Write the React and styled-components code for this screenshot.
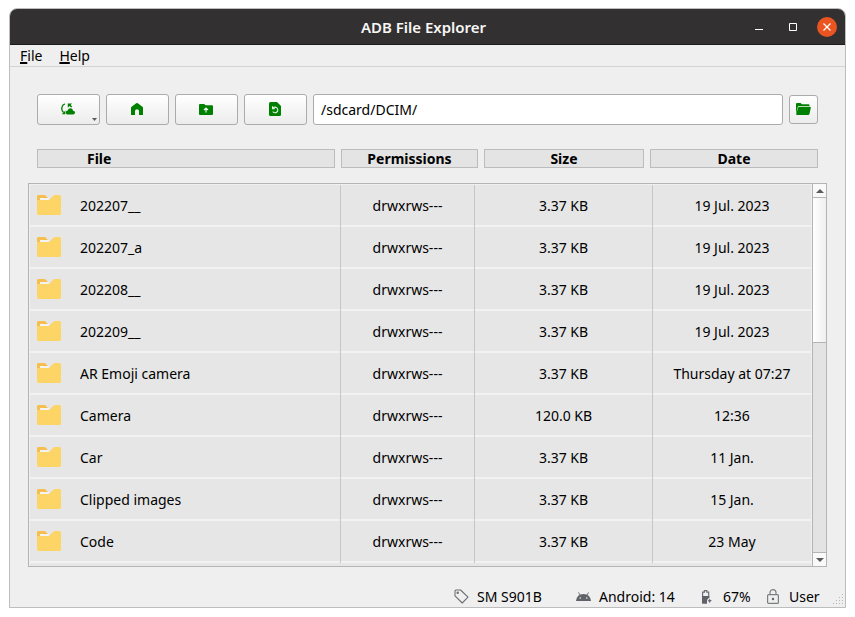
import React from "react";
import styled, { createGlobalStyle } from "styled-components";

const GlobalStyle = createGlobalStyle`
  * { box-sizing: border-box; }
  body { margin: 0; background: #ffffff; }
  body, button, input { font-family: "Noto Sans", "Open Sans", sans-serif; font-size: 14px; line-height: 20px; color: #000000; }
  button { padding: 0; cursor: pointer; }
  svg { display: block; flex: none; }
`;

const Desktop = styled.div`
  display: flex;
  height: 100vh;
  min-height: 400px;
  padding: 8px 9px 9px;
`;

const Window = styled.div`
  display: flex;
  flex: 1;
  flex-direction: column;
  min-width: 0;
  overflow: hidden;
  border: 1px solid #bdbdbd;
  border-radius: 8px 8px 0 0;
  background: #efefef;
`;

const TitleBar = styled.header`
  display: grid;
  grid-template-columns: 1fr auto 1fr;
  align-items: center;
  height: 36px;
  flex: none;
  padding-right: 8px;
  border-bottom: 1px solid #1c1b1b;
  background: #333031;
`;

const Title = styled.h1`
  grid-column: 2;
  margin: 0;
  font-size: 15px;
  font-weight: 600;
  color: #f7f7f5;
`;

const WindowControls = styled.div`
  display: flex;
  justify-content: flex-end;
  gap: 14px;
`;

const ControlButton = styled.button`
  display: grid;
  place-items: center;
  width: 20px;
  height: 20px;
  border: 0;
  border-radius: 50%;
  background: ${({ $close }) => ($close ? "#e95420" : "transparent")};
`;

const MenuBar = styled.nav`
  display: flex;
  gap: 17px;
  height: 22px;
  flex: none;
  padding-left: 10px;
  border-bottom: 1px solid #d3d3d3;
`;

const MenuButton = styled.button`
  height: 21px;
  border: 0;
  background: transparent;

  &::first-letter {
    text-decoration: underline;
    text-decoration-thickness: 2px;
  }
`;

const Content = styled.main`
  display: flex;
  flex: 1;
  flex-direction: column;
  min-height: 0;
  padding: 27px 18px 0;
`;

const Toolbar = styled.form`
  display: flex;
  align-items: center;
  gap: 6px;
  margin: 0;
  padding: 0 9px;
`;

const ToolButton = styled.button`
  position: relative;
  display: grid;
  place-items: center;
  flex: none;
  width: ${({ $compact }) => ($compact ? "29px" : "63px")};
  height: ${({ $compact }) => ($compact ? "29px" : "31px")};
  padding: 0 1px 1px 0;
  border: 1px solid #ababab;
  border-radius: 3px;
  background: linear-gradient(#ffffff, #ececec);
  color: #008000;
`;

const MenuArrow = styled.svg`
  position: absolute;
  right: 2px;
  bottom: 3px;
`;

const PathInput = styled.input`
  flex: 1;
  min-width: 0;
  height: 31px;
  padding: 0 7px;
  border: 1px solid #ababab;
  border-radius: 3px;
  background: #ffffff;
`;

const HeadTable = styled.table`
  display: block;
  margin: 24px 0 15px;
  padding: 0 9px;

  thead { display: block; }
`;

const HeadRow = styled.tr`
  display: grid;
  grid-template-columns: 298fr 137fr 160fr 168fr;
  gap: 6px;
`;

const HeadCell = styled.th`
  height: 19px;
  padding: 0 0 0 ${({ $first }) => ($first ? "49px" : "0")};
  border: 1px solid #bcbcbc;
  background: #e4e4e4;
  line-height: 18px;
  font-weight: 700;
  text-align: ${({ $first }) => ($first ? "left" : "center")};
`;

const ListFrame = styled.section`
  display: flex;
  flex: 1;
  min-height: 0;
  border: 1px solid #b4b4b4;
  background: #e6e6e6;
`;

const Viewport = styled.div`
  flex: 1;
  min-width: 0;
  overflow: auto;
  border: 1px solid #f0f0f0;
  border-bottom: 0;
`;

const FileTable = styled.table`
  display: block;

  tbody { display: block; }
`;

const FileRow = styled.tr`
  display: grid;
  grid-template-columns: 311fr 134fr 178fr 158fr;
`;

const Cell = styled.td`
  display: flex;
  align-items: center;
  justify-content: ${({ $name }) => ($name ? "flex-start" : "center")};
  gap: 19px;
  height: 42px;
  padding: 0 0 0 ${({ $name }) => ($name ? "7px" : "0")};
  border-right: 1px solid #c6c6c6;
  background: linear-gradient(#e6e6e6 40px, #f2f2f2 40px);
  white-space: nowrap;

  &:last-child { border-right: 0; }
`;

const ScrollBar = styled.div`
  display: flex;
  flex-direction: column;
  width: 14px;
  flex: none;
  border-left: 1px solid #b4b4b4;
  background: #e3e3e3;
`;

const ScrollButton = styled.button`
  display: grid;
  place-items: center;
  height: 14px;
  flex: none;
  border: 0 solid #b4b4b4;
  border-width: ${({ $down }) => ($down ? "1px 0 0" : "0 0 1px")};
  background: #f9f9f9;
`;

const ScrollTrack = styled.div`
  flex: 1;
`;

const ScrollThumb = styled.div`
  height: 41%;
  border-bottom: 1px solid #b4b4b4;
  background: linear-gradient(90deg, #ffffff, #efefef);
`;

const StatusBar = styled.footer`
  display: grid;
  grid-template-columns: 122px 124px 66px 70px 11px;
  align-items: center;
  justify-content: end;
  height: 40px;
  flex: none;
  padding: 19px 1px 0 0;
`;

const StatusItem = styled.span`
  display: flex;
  align-items: center;
  gap: 6px;
  white-space: nowrap;
`;

const StatusIcon = styled.span`
  display: grid;
  place-items: center;
  width: 20px;
  height: 20px;
`;

const Grip = styled.svg`
  align-self: end;
  margin-bottom: 2px;
`;

const FolderIcon = () => (
  <svg width="24" height="22" viewBox="0 0 24 22" aria-hidden="true">
    <path d="M1 0h7l3 3v3H0V1z" fill="#f6bd4f" />
    <path d="M3 3h9v3H3z" fill="#f3f3f3" />
    <path d="M0 5h11q2 0 3-2l2-2q1-1 2-1h5l1 1v18l-1 1H1l-1-1z" fill="#fdd466" />
  </svg>
);

const CloudSyncIcon = () => (
  <svg width="14" height="12" viewBox="0 0 14 12" fill="currentColor" aria-hidden="true">
    <path d="M3.800.9C.2 2.300-.2 7 2.600 9.600" fill="none" stroke="currentColor" strokeWidth="1.300" />
    <path d="M.8 11.200h3.600V7.600z" />
    <path d="M6.800.6h4.200L9.700 1.900l1.500 1.500-1 1-1.600-1.500L6.800 4.800z" />
    <path d="M7 11.500a2 2 0 0 1-.3-4Q7.400 5.300 9.500 5.300t2.600 2.400a1.900 1.900 0 0 1 0 3.800z" />
  </svg>
);

const HomeIcon = () => (
  <svg width="12" height="12" viewBox="0 0 12 12" fill="currentColor" aria-hidden="true">
    <path d="M0 4.800q0-.7.6-1.100L5.200.3q.8-.6 1.600 0l4.600 3.400q.6.4.6 1.100V12H8V8.200a2 2 0 0 0-4 0V12H0z" />
  </svg>
);

const FolderUpIcon = () => (
  <svg width="14" height="11" viewBox="0 0 14 11" aria-hidden="true">
    <path d="M1 0h4.200l1.400 1.300H13q1 0 1 1V10q0 1-1 1H1q-1 0-1-1V1q0-1 1-1z" fill="currentColor" />
    <path d="M7 8.500V4.500M5 6l2-2 2 2" fill="none" stroke="#e4f1e4" strokeWidth="1.200" />
  </svg>
);

const RestoreIcon = () => (
  <svg width="12" height="14" viewBox="0 0 12 14" aria-hidden="true">
    <path d="M1.500 0H8l4 4v8.500q0 1.500-1.500 1.500h-9Q0 14 0 12.500v-11Q0 0 1.500 0z" fill="currentColor" />
    <path d="M3.500 4.200v2.500H6M3.700 6.300A2.800 2.800 0 1 1 3.700 9.500" fill="none" stroke="#e4f1e4" strokeWidth="1.100" />
  </svg>
);

const OpenFolderIcon = () => (
  <svg width="15" height="12" viewBox="0 0 15 12" aria-hidden="true">
    <path d="M0 11V1q0-1 1-1h3.500L6 1.200h6.500q1 0 1 1V3H3.200Q2 3 1.800 4z" fill="currentColor" />
    <path d="M3.600 3.800H14q1 0 .8 1l-1.200 5.800Q13.400 12 12.400 12H1q-1 0-.8-1l1.800-6q.3-1.200 1.600-1.200z" fill="currentColor" />
  </svg>
);

const TagIcon = () => (
  <svg width="15" height="15" viewBox="0 0 15 15" fill="none" stroke="#6c6f72" strokeWidth="1.100" aria-hidden="true">
    <path d="M1 2q0-1 1-1h4.600L14 8.200 8.200 14 1 6.800z" strokeLinejoin="round" />
    <circle cx="3.700" cy="3.700" r=".7" />
  </svg>
);

const AndroidIcon = () => (
  <svg width="15" height="9" viewBox="0 0 15 9" aria-hidden="true">
    <path d="M4 3 2.500.4M11 3l1.500-2.600" stroke="#5f6368" strokeWidth=".9" fill="none" />
    <path d="M0 9Q.8 2 7.500 2T15 9z" fill="#5f6368" />
    <circle cx="4.200" cy="6" r=".8" fill="#efefef" />
    <circle cx="10.800" cy="6" r=".8" fill="#efefef" />
  </svg>
);

const BatteryIcon = () => (
  <svg width="10" height="14" viewBox="0 0 10 14" aria-hidden="true">
    <path d="M.6 13V2.200h1.800V.6h2.400v1.600h1.900V8" fill="none" stroke="#6c6f72" strokeWidth="1.200" />
    <path d="M0 6h7.300v1.500L5 10v3.800H.8q-.8 0-.8-.8z" fill="#5f6368" />
    <path d="M7.700 8.400l.7 1.700 1.600.7-1.600.7-.7 1.700-.7-1.700-1.600-.7 1.600-.7z" fill="#5f6368" />
  </svg>
);

const LockIcon = () => (
  <svg width="12" height="15" viewBox="0 0 12 15" aria-hidden="true">
    <rect x=".6" y="5.600" width="10.800" height="8.800" rx="1" fill="none" stroke="#7c7f82" strokeWidth="1.200" />
    <path d="M3 5.500V3.600a3 3 0 0 1 6 0v1.900" fill="none" stroke="#7c7f82" strokeWidth="1.200" />
    <circle cx="6" cy="10" r="1.200" fill="#5f6368" />
  </svg>
);

const files = [
  ["202207__", "3.37 KB", "19 Jul. 2023"],
  ["202207_a", "3.37 KB", "19 Jul. 2023"],
  ["202208__", "3.37 KB", "19 Jul. 2023"],
  ["202209__", "3.37 KB", "19 Jul. 2023"],
  ["AR Emoji camera", "3.37 KB", "Thursday at 07:27"],
  ["Camera", "120.0 KB", "12:36"],
  ["Car", "3.37 KB", "11 Jan."],
  ["Clipped images", "3.37 KB", "15 Jan."],
  ["Code", "3.37 KB", "23 May"],
];

const gripDots = [[8, 0], [5, 3], [8, 3], [2, 6], [5, 6], [8, 6], [-1, 9], [2, 9], [5, 9], [8, 9]];

export default function App() {
  return (
    <Desktop>
      <GlobalStyle />
      <Window>
        <TitleBar>
          <Title>ADB File Explorer</Title>
          <WindowControls>
            <ControlButton aria-label="Minimize">
              <svg width="8" height="8"><path d="M0 6h8v1H0z" fill="#ffffff" /></svg>
            </ControlButton>
            <ControlButton aria-label="Maximize">
              <svg width="8" height="8"><path d="M.5.5h7v7h-7z" fill="none" stroke="#ffffff" /></svg>
            </ControlButton>
            <ControlButton $close aria-label="Close">
              <svg width="8" height="8"><path d="M.5.5l7 7m0-7l-7 7" stroke="#ffffff" strokeWidth="1.300" /></svg>
            </ControlButton>
          </WindowControls>
        </TitleBar>
        <MenuBar>
          <MenuButton>File</MenuButton>
          <MenuButton>Help</MenuButton>
        </MenuBar>
        <Content>
          <Toolbar onSubmit={(event) => event.preventDefault()}>
            <ToolButton type="button" aria-label="Devices">
              <CloudSyncIcon />
              <MenuArrow width="5" height="3" aria-hidden="true"><path d="M0 0h5L2.500 3z" fill="#5a5a5a" /></MenuArrow>
            </ToolButton>
            <ToolButton type="button" aria-label="Home"><HomeIcon /></ToolButton>
            <ToolButton type="button" aria-label="Parent folder"><FolderUpIcon /></ToolButton>
            <ToolButton type="button" aria-label="Refresh"><RestoreIcon /></ToolButton>
            <PathInput type="text" aria-label="Path" defaultValue="/sdcard/DCIM/" />
            <ToolButton $compact type="submit" aria-label="Open path"><OpenFolderIcon /></ToolButton>
          </Toolbar>
          <HeadTable>
            <thead>
              <HeadRow>
                <HeadCell $first>File</HeadCell>
                <HeadCell>Permissions</HeadCell>
                <HeadCell>Size</HeadCell>
                <HeadCell>Date</HeadCell>
              </HeadRow>
            </thead>
          </HeadTable>
          <ListFrame>
            <Viewport>
              <FileTable aria-label="Files">
                <tbody>
                  {files.map(([name, size, date]) => (
                    <FileRow key={name}>
                      <Cell $name><FolderIcon />{name}</Cell>
                      <Cell>drwxrws---</Cell>
                      <Cell>{size}</Cell>
                      <Cell>{date}</Cell>
                    </FileRow>
                  ))}
                </tbody>
              </FileTable>
            </Viewport>
            <ScrollBar>
              <ScrollButton aria-label="Scroll up">
                <svg width="8" height="4"><path d="M0 4h8L4 0z" fill="#5a5a5a" /></svg>
              </ScrollButton>
              <ScrollTrack><ScrollThumb /></ScrollTrack>
              <ScrollButton $down aria-label="Scroll down">
                <svg width="8" height="4"><path d="M0 0h8L4 4z" fill="#5a5a5a" /></svg>
              </ScrollButton>
            </ScrollBar>
          </ListFrame>
        </Content>
        <StatusBar>
          <StatusItem><StatusIcon><TagIcon /></StatusIcon>SM S901B</StatusItem>
          <StatusItem><StatusIcon><AndroidIcon /></StatusIcon>Android: 14</StatusItem>
          <StatusItem><StatusIcon><BatteryIcon /></StatusIcon>67%</StatusItem>
          <StatusItem><StatusIcon><LockIcon /></StatusIcon>User</StatusItem>
          <Grip width="11" height="11" viewBox="-1 0 11 11" aria-hidden="true">
            {gripDots.map(([x, y]) => <rect key={`${x}-${y}`} x={x} y={y} width="1" height="1" fill="#b5b5b5" />)}
          </Grip>
        </StatusBar>
      </Window>
    </Desktop>
  );
}
